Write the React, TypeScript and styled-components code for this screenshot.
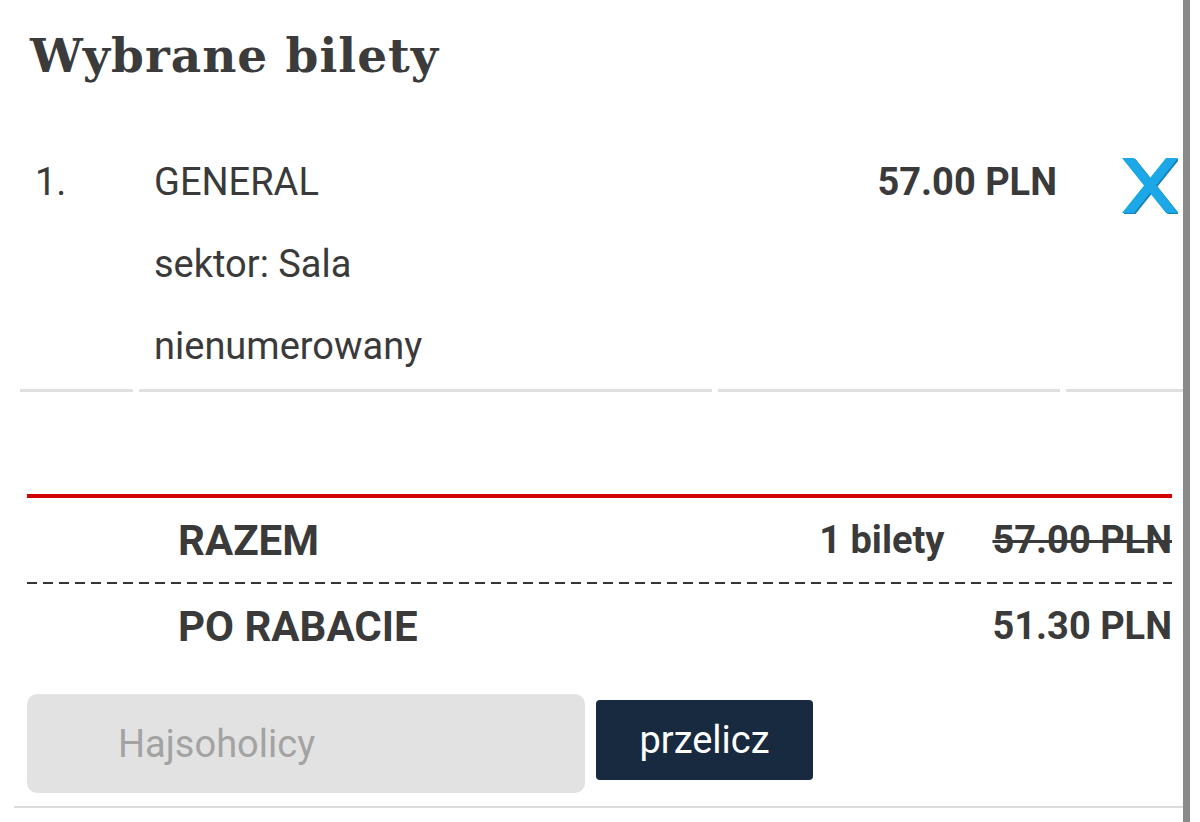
import styled, { createGlobalStyle } from 'styled-components'

const GlobalStyle = createGlobalStyle`
  html, body {
    margin: 0;
    padding: 0;
    background: #fff;
  }
  body {
    font-family: Roboto, 'Liberation Sans', sans-serif;
    color: #3a3a3a;
  }
`

const Page = styled.div`
  display: flex;
  height: 822px;
  overflow: hidden;
`

const Main = styled.div`
  width: 1183px;
  display: flex;
  flex-direction: column;
`

const ScrollEdge = styled.div`
  width: 7px;
  background: #8a8a8a;
`

const Title = styled.h1`
  margin: 26px 0 0 30px;
  font-family: 'DejaVu Serif', serif;
  font-weight: 700;
  font-size: 47px;
  line-height: 60px;
  color: #3b3b3b;
  letter-spacing: 1px;
`

const TicketRow = styled.div`
  display: grid;
  grid-template-columns: 113px 573px 342px 117px;
  column-gap: 6px;
  margin: 55px 0 0 20px;
`

const Cell = styled.div<{ $align?: 'left' | 'right' }>`
  border-bottom: 3px solid #e0e0e0;
  padding: 0 ${(p) => (p.$align === 'right' ? '3px' : '0')} 2px ${(p) => (p.$align === 'right' ? '0' : '15px')};
  text-align: ${(p) => p.$align ?? 'left'};
`

const Line = styled.p<{ $bold?: boolean }>`
  margin: 0;
  font-size: 38px;
  line-height: 82px;
  font-weight: ${(p) => (p.$bold ? 700 : 400)};
`

const RemoveCell = styled.div`
  border-bottom: 3px solid #e0e0e0;
  display: flex;
  justify-content: flex-end;
  padding: 17px 5px 0 0;
`

const RemoveBtn = styled.button`
  border: 0;
  padding: 0;
  background: none;
  cursor: pointer;
  height: 56px;
`

const Summary = styled.div`
  margin: 102px 0 0 27px;
  width: 1145px;
  border-top: 4px solid #d40000;
`

const SumRow = styled.div`
  display: flex;
  align-items: center;
  height: 56px;
  padding: 14px 0 14px 151px;
  font-weight: 700;
`

const Dashed = styled.div`
  height: 2px;
  background: repeating-linear-gradient(to right, #333 0 10px, transparent 10px 16px);
`

const Label = styled.span`
  flex: 1;
  font-size: 42px;
`

const Count = styled.span`
  font-size: 38px;
  margin-right: 48px;
`

const Price = styled.span<{ $old?: boolean }>`
  font-size: 38px;
  text-decoration: ${(p) => (p.$old ? 'line-through' : 'none')};
  text-decoration-thickness: 3px;
`

const CodeForm = styled.form`
  display: flex;
  align-items: flex-start;
  gap: 11px;
  margin: 26px 0 0 27px;
`

const CodeInput = styled.input`
  width: 558px;
  height: 99px;
  box-sizing: border-box;
  border: 0;
  border-radius: 10px;
  background: #e2e2e2;
  padding: 0 0 0 91px;
  font-family: Roboto, 'Liberation Sans', sans-serif;
  font-size: 38px;
  color: #333;
  outline: none;
  &::placeholder {
    color: #a3a3a3;
  }
`

const RecalcButton = styled.button`
  width: 217px;
  height: 80px;
  margin-top: 6px;
  border: 0;
  border-radius: 4px;
  background: #182a40;
  color: #fff;
  font-family: Roboto, 'Liberation Sans', sans-serif;
  font-size: 38px;
  cursor: pointer;
`

const BottomRule = styled.div`
  margin: 13px 0 0 14px;
  height: 2px;
  background: #dcdcdc;
`

const CloseIcon = () => (
  <svg width="56" height="56" viewBox="0 0 56 56">
    <g fill="#1282b8" transform="translate(1.5 1)">
      <polygon points="0,0 12,0 56,55 44,55" />
      <polygon points="44,0 56,0 12,55 0,55" />
    </g>
    <g fill="#1ca8e6">
      <polygon points="0,0 12,0 56,55 44,55" />
      <polygon points="44,0 56,0 12,55 0,55" />
    </g>
  </svg>
)

export default () => {
  const ticket = { no: 1, name: 'GENERAL', sector: 'Sala', seat: 'nienumerowany', price: '57.00 PLN' }

  return (
    <Page>
      <GlobalStyle />
      <Main>
        <Title>Wybrane bilety</Title>
        <TicketRow>
          <Cell>
            <Line>{ticket.no}.</Line>
          </Cell>
          <Cell>
            <Line>{ticket.name}</Line>
            <Line>sektor: {ticket.sector}</Line>
            <Line>{ticket.seat}</Line>
          </Cell>
          <Cell $align="right">
            <Line $bold>{ticket.price}</Line>
          </Cell>
          <RemoveCell>
            <RemoveBtn type="button" aria-label="usuń">
              <CloseIcon />
            </RemoveBtn>
          </RemoveCell>
        </TicketRow>
        <Summary>
          <SumRow>
            <Label>RAZEM</Label>
            <Count>1 bilety</Count>
            <Price $old>57.00 PLN</Price>
          </SumRow>
          <Dashed />
          <SumRow>
            <Label>PO RABACIE</Label>
            <Price>51.30 PLN</Price>
          </SumRow>
        </Summary>
        <CodeForm onSubmit={(e) => e.preventDefault()}>
          <CodeInput placeholder="Hajsoholicy" />
          <RecalcButton type="submit">przelicz</RecalcButton>
        </CodeForm>
        <BottomRule />
      </Main>
      <ScrollEdge />
    </Page>
  )
}
